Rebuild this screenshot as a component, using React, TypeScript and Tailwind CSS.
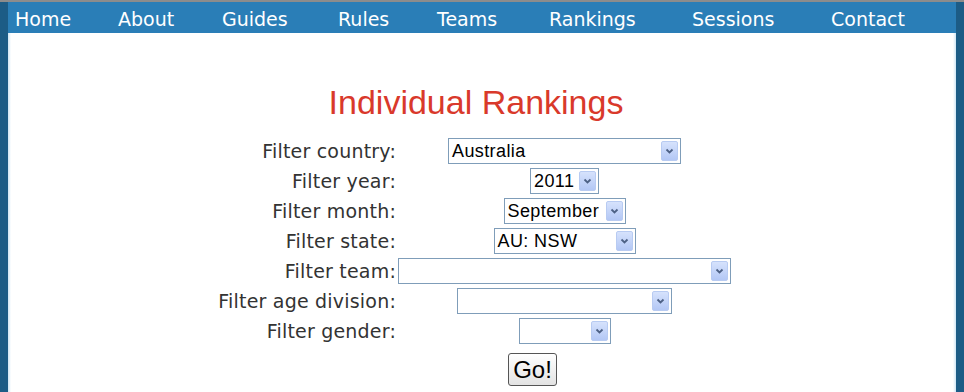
import React from "react";

const navItems: { label: string; w: string }[] = [
  { label: "Home", w: "w-[103px]" },
  { label: "About", w: "w-[104px]" },
  { label: "Guides", w: "w-[116px]" },
  { label: "Rules", w: "w-[99px]" },
  { label: "Teams", w: "w-[112px]" },
  { label: "Rankings", w: "w-[143px]" },
  { label: "Sessions", w: "w-[139px]" },
  { label: "Contact", w: "w-[110px]" },
];

function Arrow() {
  return (
    <div className="absolute right-[2px] top-[2px] bottom-[2px] w-[17px] rounded-[2px] border border-[#b8cbf2] bg-gradient-to-b from-[#d6e2fc] to-[#b3c7f5] flex items-center justify-center">
      <svg width="9" height="6" viewBox="0 0 9 6">
        <path d="M1.5 1.5 L4.5 4.5 L7.5 1.5" fill="none" stroke="#4d6185" strokeWidth="1.8" />
      </svg>
    </div>
  );
}

function FakeSelect({ w, value }: { w: string; value?: string }) {
  return (
    <div
      className={`relative h-[26px] ${w} border border-[#7f9db9] bg-white flex items-center pl-[3px] text-[18px] tracking-[0.4px] text-black`}
      style={{ fontFamily: "Arial, 'Liberation Sans', sans-serif" }}
    >
      <span className="leading-none">{value}</span>
      <Arrow />
    </div>
  );
}

const rows: { label: string; w: string; value?: string }[] = [
  { label: "Filter country:", w: "w-[233px]", value: "Australia" },
  { label: "Filter year:", w: "w-[69px]", value: "2011" },
  { label: "Filter month:", w: "w-[122px]", value: "September" },
  { label: "Filter state:", w: "w-[142px]", value: "AU: NSW" },
  { label: "Filter team:", w: "w-[333px]" },
  { label: "Filter age division:", w: "w-[215px]" },
  { label: "Filter gender:", w: "w-[92px]" },
];

export default function App() {
  return (
    <div className="w-[964px] h-[392px] bg-white overflow-hidden flex flex-col">
      <div className="h-[2px] bg-[#8c8c8c]" />
      <div className="flex flex-1">
        <div className="w-[8px] bg-[#1c5c86]" />
        <div className="w-[3px] bg-gradient-to-r from-[#cfe6f5] to-white mt-[31px]" />
        <div className="flex-1 flex flex-col">
          <div
            className="h-[31px] -ml-[3px] -mr-[3px] bg-[#2a7eb7] flex items-center pl-[7px] pt-[3px] text-white text-[19px]"
            style={{ fontFamily: "Verdana, 'DejaVu Sans', sans-serif" }}
          >
            {navItems.map((n) => (
              <div key={n.label} className={`${n.w} shrink-0 leading-none`}>
                {n.label}
              </div>
            ))}
          </div>
          <div className="flex flex-col items-center pr-[12px]">
            <h1
              className="mt-[52px] text-[34px] leading-none text-[#d9392b] h-[53px]"
              style={{ fontFamily: "Arial, 'Liberation Sans', sans-serif" }}
            >
              Individual Rankings
            </h1>
          </div>
          <div className="flex flex-col gap-[4px]">
            {rows.map((r) => (
              <div key={r.label} className="flex items-center h-[26px]">
                <div
                  className="w-[386px] pr-[1px] text-right text-[19px] tracking-[0.2px] text-[#333] leading-none"
                  style={{ fontFamily: "Verdana, 'DejaVu Sans', sans-serif" }}
                >
                  {r.label}
                </div>
                <div className="w-[335px] flex justify-center">
                  <FakeSelect w={r.w} value={r.value} />
                </div>
              </div>
            ))}
            <div className="flex mt-[5px] pl-[497px]">
              <button
                className="w-[49px] h-[33px] rounded-[3px] border border-[#555] bg-gradient-to-b from-white to-[#e3e3e3] text-[24px] text-black leading-none"
                style={{ fontFamily: "Arial, 'Liberation Sans', sans-serif" }}
              >
                Go!
              </button>
            </div>
          </div>
        </div>
        <div className="w-[3px] bg-gradient-to-l from-[#cfe6f5] to-white mt-[31px]" />
        <div className="w-[8px] bg-[#1c5c86]" />
      </div>
    </div>
  );
}
